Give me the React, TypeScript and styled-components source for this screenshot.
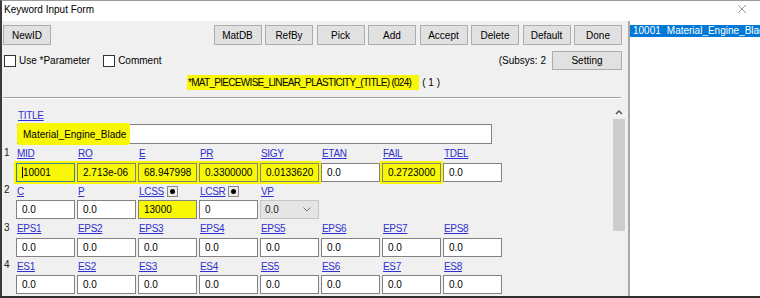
import styled, { createGlobalStyle } from "styled-components";

const GlobalStyle = createGlobalStyle`
  html, body { margin: 0; padding: 0; background: #fff; }
  body {
    font-family: "Liberation Sans", Arial, sans-serif;
    font-size: 10px;
    color: #000;
  }
  * { box-sizing: border-box; }
`;

type Cell = {
  label: string;
  value: string;
  mark?: "fill" | "glow";
  pick?: boolean;
  select?: boolean;
  focused?: boolean;
};

const rows: Cell[][] = [
  [
    { label: "MID", value: "10001", mark: "glow", focused: true },
    { label: "RO", value: "2.713e-06", mark: "glow" },
    { label: "E", value: "68.947998", mark: "glow" },
    { label: "PR", value: "0.3300000", mark: "glow" },
    { label: "SIGY", value: "0.0133620", mark: "glow" },
    { label: "ETAN", value: "0.0" },
    { label: "FAIL", value: "0.2723000", mark: "glow" },
    { label: "TDEL", value: "0.0" },
  ],
  [
    { label: "C", value: "0.0" },
    { label: "P", value: "0.0" },
    { label: "LCSS", value: "13000", mark: "fill", pick: true },
    { label: "LCSR", value: "0", pick: true },
    { label: "VP", value: "0.0", select: true },
  ],
  [1, 2, 3, 4, 5, 6, 7, 8].map((n) => ({ label: `EPS${n}`, value: "0.0" })),
  [1, 2, 3, 4, 5, 6, 7, 8].map((n) => ({ label: `ES${n}`, value: "0.0" })),
];

const tools = ["MatDB", "RefBy", "Pick", "Add", "Accept", "Delete", "Default", "Done"];

export default function App() {
  return (
    <>
      <GlobalStyle />
      <Window>
        <TitleBar>
          <span>Keyword Input Form</span>
          <svg width="10" height="10" viewBox="0 0 10 10">
            <path d="M1 1 L9 9 M9 1 L1 9" stroke="#9a9a9a" strokeWidth="1" />
          </svg>
        </TitleBar>
        <Body>
          <FormPane>
            <Toolbar>
              <Button>NewID</Button>
              <ButtonGroup>
                {tools.map((t) => (
                  <Button key={t}>{t}</Button>
                ))}
              </ButtonGroup>
            </Toolbar>
            <OptionsRow>
              <CheckLabel>
                <CheckBox />
                Use *Parameter
              </CheckLabel>
              <CheckLabel>
                <CheckBox />
                Comment
              </CheckLabel>
              <Spacer />
              <Subsys>(Subsys: 2</Subsys>
              <Button $w={70} $h={19}>Setting</Button>
            </OptionsRow>
            <HeaderRow>
              <KeywordName>*MAT_PIECEWISE_LINEAR_PLASTICITY_(TITLE) (024)</KeywordName>
              <span>( 1 )</span>
            </HeaderRow>
            <Divider />
            <ScrollArea>
              <Fields>
                <TitleBlock>
                  <FieldLabel>
                    <LinkText>TITLE</LinkText>
                  </FieldLabel>
                  <TitleBox>
                    <Marker>Material_Engine_Blade</Marker>
                  </TitleBox>
                </TitleBlock>
                {rows.map((cells, i) => (
                  <FieldRow key={i}>
                    <RowNum>{i + 1}</RowNum>
                    {cells.map((c) => (
                      <Field key={c.label}>
                        <FieldLabel>
                          <LinkText>{c.label}</LinkText>
                          {c.pick && (
                            <PickButton>
                              <Dot />
                            </PickButton>
                          )}
                        </FieldLabel>
                        {c.select ? (
                          <SelectBox>
                            <span>{c.value}</span>
                            <svg width="8" height="5" viewBox="0 0 8 5">
                              <path d="M0.5 0.5 L4 4 L7.5 0.5" fill="none" stroke="#777" strokeWidth="1" />
                            </svg>
                          </SelectBox>
                        ) : (
                          <TextBox $mark={c.mark} $focused={c.focused}>
                            {c.focused && <Caret />}
                            {c.value}
                          </TextBox>
                        )}
                      </Field>
                    ))}
                  </FieldRow>
                ))}
              </Fields>
              <ScrollBar>
                <svg width="8" height="6" viewBox="0 0 8 6">
                  <path d="M1 5 L4 2 L7 5" fill="none" stroke="#555" strokeWidth="1.5" />
                </svg>
                <Thumb />
              </ScrollBar>
            </ScrollArea>
          </FormPane>
          <ListPane>
            <ListItem>
              <ItemId>10001</ItemId>
              Material_Engine_Blade
            </ListItem>
          </ListPane>
        </Body>
      </Window>
    </>
  );
}

const yellow = "#f8f806";

const Window = styled.div`
  width: 760px;
  height: 298px;
  display: flex;
  flex-direction: column;
  overflow: hidden;
  border-left: 2px solid #3a3a3a;
  border-bottom: 2px solid #2e2e2e;
  border-top: 1px solid #9a9a9a;
  background: #fff;
`;

const TitleBar = styled.div`
  height: 20px;
  display: flex;
  align-items: center;
  justify-content: space-between;
  padding: 0 13px 4px 2px;
  flex-shrink: 0;
`;

const Body = styled.div`
  flex: 1;
  display: flex;
  min-height: 0;
`;

const FormPane = styled.div`
  width: 626px;
  flex-shrink: 0;
  background: #f0f0f0;
  display: flex;
  flex-direction: column;
`;

const Toolbar = styled.div`
  display: flex;
  justify-content: space-between;
  padding: 4px 6px 0 1px;
`;

const ButtonGroup = styled.div`
  display: flex;
  gap: 3.5px;
`;

const Button = styled.button<{ $w?: number; $h?: number }>`
  width: ${(p) => p.$w ?? 48}px;
  height: ${(p) => p.$h ?? 20}px;
  padding: 0;
  background: #e1e1e1;
  border: 1px solid #adadad;
  border-radius: 0;
  font-family: inherit;
  font-size: 10px;
  color: #000;
`;

const OptionsRow = styled.div`
  display: flex;
  align-items: center;
  height: 19px;
  margin-top: 6px;
  padding: 0 6px 0 2px;
  gap: 0;
`;

const CheckLabel = styled.label`
  display: flex;
  align-items: center;
  gap: 3px;
  margin-right: 13px;
`;

const CheckBox = styled.span`
  width: 12px;
  height: 12px;
  border: 1px solid #333;
  background: #fff;
`;

const Spacer = styled.div`
  flex: 1;
`;

const Subsys = styled.span`
  margin-right: 6px;
`;

const HeaderRow = styled.div`
  height: 17px;
  margin-top: 4px;
  display: flex;
  align-items: center;
  justify-content: center;
  gap: 3px;
  padding-right: 3px;
`;

const KeywordName = styled.span`
  background: ${yellow};
  padding: 2px 8px 2px 1px;
  letter-spacing: -0.7px;
`;

const Divider = styled.div`
  height: 1px;
  margin: 6px 7px 0 1px;
  background: #a0a0a0;
  box-shadow: 0 1px 0 #fff;
`;

const ScrollArea = styled.div`
  flex: 1;
  display: flex;
  margin-top: 2px;
  min-height: 0;
`;

const Fields = styled.div`
  flex: 1;
  padding: 6px 0 0 2px;
  display: flex;
  flex-direction: column;
`;

const TitleBlock = styled.div`
  padding-left: 13px;
  display: flex;
  flex-direction: column;
`;

const FieldLabel = styled.div`
  height: 18px;
  display: flex;
  align-items: center;
  gap: 3px;
  padding-left: 1px;
`;

const LinkText = styled.span`
  color: #2f2fd2;
  text-decoration: underline;
  letter-spacing: -0.3px;
`;

const TitleBox = styled.div`
  width: 475px;
  height: 20px;
  background: #fff;
  border: 1px solid #828282;
  display: flex;
  align-items: stretch;
`;

const Marker = styled.span`
  background: ${yellow};
  padding: 0 4px 0 6px;
  display: flex;
  align-items: center;
  margin: -2px 0 -2px -1px;
  border-radius: 3px;
`;

const FieldRow = styled.div`
  display: grid;
  grid-template-columns: 10px repeat(8, 59px);
  column-gap: 2px;
  margin-top: 0.5px;
`;

const RowNum = styled.span`
  line-height: 16px;
  color: #222;
`;

const Field = styled.div`
  display: flex;
  flex-direction: column;
`;

const TextBox = styled.div<{ $mark?: "fill" | "glow"; $focused?: boolean }>`
  height: 19px;
  padding-left: 5px;
  display: flex;
  align-items: center;
  border: 1px solid ${(p) => (p.$focused ? "#3d7f9a" : "#828282")};
  background: ${(p) => (p.$mark ? yellow : "#fff")};
  box-shadow: ${(p) => (p.$mark === "glow" ? `0 0 0 2px ${yellow}` : "none")};
  white-space: nowrap;
`;

const Caret = styled.span`
  width: 1px;
  height: 11px;
  background: #000;
  margin-right: 0;
`;

const SelectBox = styled.div`
  height: 19px;
  padding: 0 7px 0 4px;
  display: flex;
  align-items: center;
  justify-content: space-between;
  background: #e5e5e5;
  border: 1px solid #c4c4c4;
  color: #222;
`;

const PickButton = styled.span`
  width: 11px;
  height: 11px;
  border: 1px solid #8a8a8a;
  background: #ececec;
  display: flex;
  align-items: center;
  justify-content: center;
`;

const Dot = styled.span`
  width: 5px;
  height: 5px;
  border-radius: 50%;
  background: #000;
`;

const ScrollBar = styled.div`
  width: 13px;
  margin-right: 3px;
  display: flex;
  flex-direction: column;
  align-items: center;
  padding-top: 9px;
  background: #f0f0f0;
`;

const Thumb = styled.div`
  width: 12px;
  height: 112px;
  margin-top: 4px;
  background: #cdcdcd;
`;

const ListPane = styled.div`
  flex: 1;
  background: #fff;
  border-left: 2px solid #a8a8a8;
  overflow: hidden;
`;

const ListItem = styled.div`
  margin-top: 4px;
  height: 12px;
  line-height: 12px;
  padding-left: 3px;
  background: #0078d7;
  color: #fff;
  white-space: nowrap;
`;

const ItemId = styled.span`
  margin-right: 6px;
`;
